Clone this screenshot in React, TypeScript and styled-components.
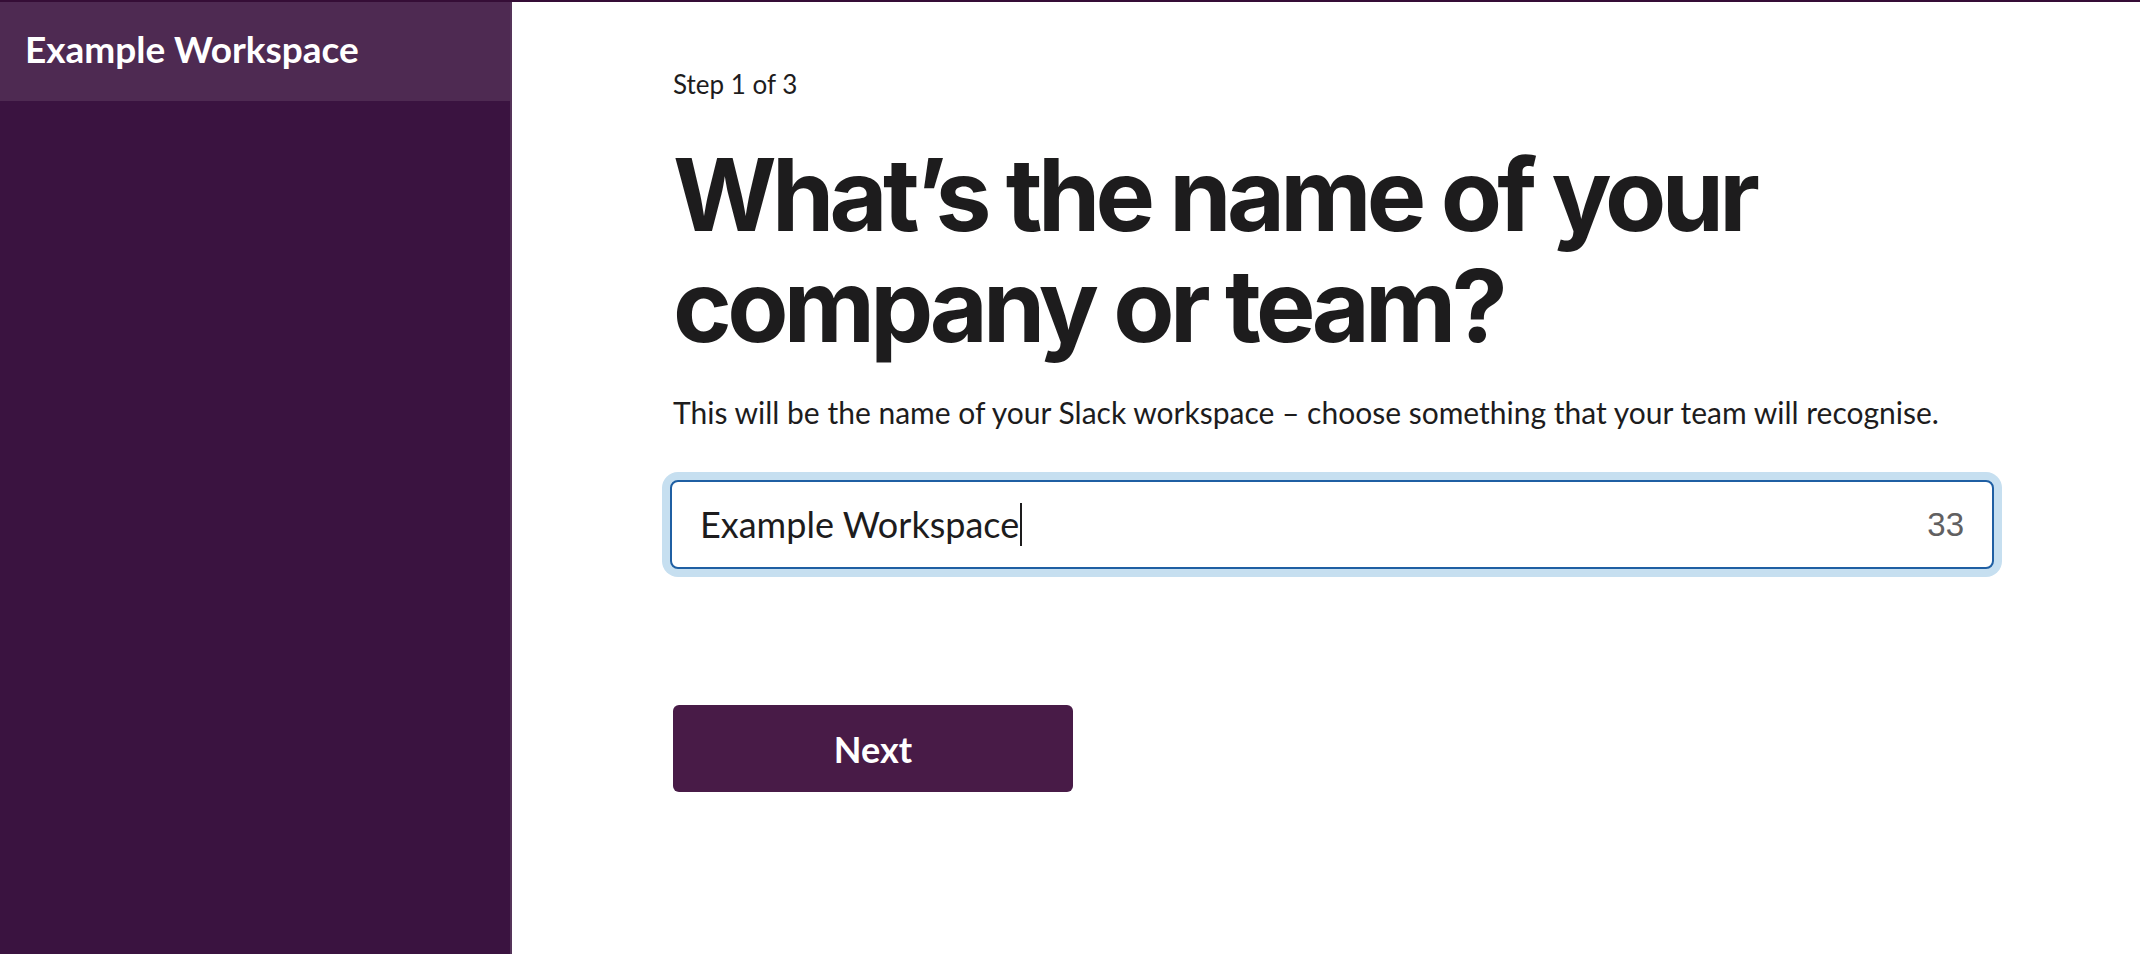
import React from "react";
import styled, { createGlobalStyle } from "styled-components";

const GlobalStyle = createGlobalStyle`
  html, body {
    margin: 0;
    padding: 0;
    background: #ffffff;
  }
  * { box-sizing: border-box; }
`;

const Shell = styled.div`
  display: grid;
  grid-template-columns: 512px 1fr;
  height: 954px;
  border-top: 2px solid #350d36;
  overflow: hidden;
`;

const Sidebar = styled.aside`
  background: #3a1340;
  border-right: 2px solid #55345a;
  display: flex;
  flex-direction: column;
`;

const SidebarHeader = styled.div`
  height: 99px;
  background: #4e2a52;
  display: flex;
  align-items: center;
  padding: 0 0 4px 25px;
`;

const WorkspaceTitle = styled.h1`
  margin: 0;
  font-family: Lato, "Noto Sans", sans-serif;
  font-weight: 700;
  font-size: 37px;
  line-height: 1.2;
  color: #ffffff;
`;

const Main = styled.main`
  display: flex;
  flex-direction: column;
  align-items: flex-start;
  padding: 67px 0 0 161px;
`;

const StepLabel = styled.div`
  font-family: Lato, "Noto Sans", sans-serif;
  font-size: 26px;
  line-height: 1.2;
  color: #1d1c1d;
`;

const Heading = styled.h2`
  margin: 39px 0 0;
  font-family: Inter, "Noto Sans", sans-serif;
  font-weight: 700;
  font-size: 100px;
  line-height: 111px;
  letter-spacing: -0.047em;
  color: #1d1c1d;
  max-width: 1200px;
`;

const Description = styled.p`
  margin: 33px 0 0;
  font-family: Lato, "Noto Sans", sans-serif;
  font-size: 30px;
  line-height: 1.2;
  color: #1d1c1d;
`;

const Field = styled.div`
  margin: 50px 0 0 -3px;
  width: 1324px;
  height: 89px;
  border: 2px solid #1f5fa3;
  border-radius: 8px;
  box-shadow: 0 0 0 8px #c6dff0;
  background: #ffffff;
  display: flex;
  align-items: center;
  padding: 0 28px;
`;

const FieldValue = styled.span`
  flex: 1;
  display: flex;
  align-items: center;
  font-family: Lato, "Noto Sans", sans-serif;
  font-size: 36px;
  line-height: 1.2;
  color: #1d1c1d;
`;

const Caret = styled.span`
  display: inline-block;
  width: 2px;
  height: 43px;
  margin-left: 1px;
  background: #1d1c1d;
`;

const Counter = styled.span`
  font-family: "Liberation Sans", Arial, sans-serif;
  font-size: 33px;
  color: #616061;
`;

const NextButton = styled.button`
  margin-top: 136px;
  width: 400px;
  height: 87px;
  border: none;
  border-radius: 6px;
  background: #481b47;
  color: #ffffff;
  font-family: Lato, "Noto Sans", sans-serif;
  font-weight: 700;
  font-size: 36px;
  cursor: pointer;
`;

export default function App() {
  const value = "Example Workspace";
  const remaining = 50 - value.length;
  return (
    <>
      <GlobalStyle />
      <Shell>
        <Sidebar>
          <SidebarHeader>
            <WorkspaceTitle>{value}</WorkspaceTitle>
          </SidebarHeader>
        </Sidebar>
        <Main>
          <StepLabel>Step 1 of 3</StepLabel>
          <Heading>What’s the name of your company or team?</Heading>
          <Description>
            This will be the name of your Slack workspace – choose something that your team will recognise.
          </Description>
          <Field role="textbox" aria-label="Workspace name">
            <FieldValue>
              {value}
              <Caret />
            </FieldValue>
            <Counter>{remaining}</Counter>
          </Field>
          <NextButton type="button">Next</NextButton>
        </Main>
      </Shell>
    </>
  );
}
